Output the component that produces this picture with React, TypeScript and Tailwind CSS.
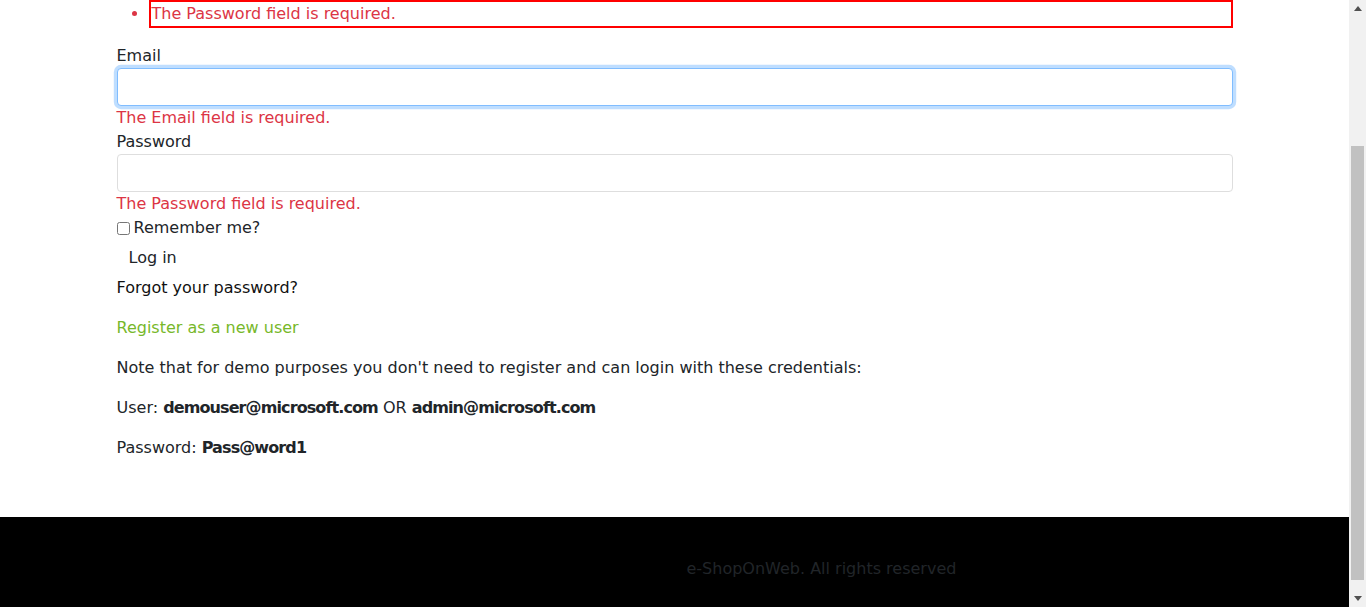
import React, { useLayoutEffect, useRef } from "react";

function Scrollbar() {
  return (
    <div className="flex h-[607px] w-[17px] shrink-0 flex-col bg-[#f1f1f1]">
      <div className="flex h-[17px] items-center justify-center">
        <svg width="8" height="5" viewBox="0 0 8 5">
          <polygon points="4,0 8,5 0,5" fill="#505050" />
        </svg>
      </div>
      <div className="flex flex-1 flex-col px-[2px]">
        <div className="h-[129px]" />
        <div className="h-[434px] bg-[#c1c1c1]" />
      </div>
      <div className="flex h-[17px] items-center justify-center">
        <svg width="8" height="5" viewBox="0 0 8 5">
          <polygon points="0,0 8,0 4,5" fill="#505050" />
        </svg>
      </div>
    </div>
  );
}

export default function App() {
  const ref = useRef<HTMLDivElement>(null);
  useLayoutEffect(() => {
    if (ref.current) ref.current.scrollTop = 179;
  }, []);

  return (
    <div className="flex h-[607px] w-full overflow-hidden bg-white font-['DejaVu_Sans',sans-serif] text-[16px] leading-[24px] text-[#212529]">
      <div ref={ref} className="h-[607px] flex-1 overflow-hidden">
        <header className="h-[100px] bg-black" />
        <main className="mx-auto w-[1116px] pt-[31px] pb-[16px]">
          <h2 className="mb-[8px] text-[32px] leading-[40px]">Log in</h2>
          <ul className="mb-[16px] list-disc pl-[32px] text-[#dc3545]">
            <li className="border-2 border-[#ff0000] pl-[1px] leading-[24px] marker:text-[#dc3545]">
              The Password field is required.
            </li>
          </ul>

          <div className="flex flex-col">
            <label className="text-[#212529]">Email</label>
            <input
              type="email"
              className="h-[38px] w-full rounded-[4px] border border-[#80bdff] bg-white px-3 shadow-[0_0_0_0.2rem_rgba(0,123,255,0.25)] outline-none"
            />
            <span className="leading-[24px] text-[#dc3545]">The Email field is required.</span>
          </div>

          <div className="flex flex-col">
            <label className="text-[#212529]">Password</label>
            <input
              type="password"
              className="h-[38px] w-full rounded-[4px] border border-[#dedede] bg-white px-3 outline-none"
            />
            <span className="leading-[24px] text-[#dc3545]">The Password field is required.</span>
          </div>

          <label className="flex items-center">
            <input type="checkbox" className="mr-[4px] h-[13px] w-[13px]" />
            <span>Remember me?</span>
          </label>

          <button type="button" className="bg-transparent px-[12px] py-[6px] text-[#212529]">
            Log in
          </button>

          <p className="mb-[16px]">
            <a className="text-[#111]">Forgot your password?</a>
          </p>
          <p className="mb-[16px]">
            <a className="text-[#77b82a]">Register as a new user</a>
          </p>
          <p className="mb-[16px]">
            Note that for demo purposes you don't need to register and can login with these credentials:
          </p>
          <p className="mb-[16px]">
            User: <b className="font-bold tracking-[-0.9px]">demouser@microsoft.com</b> OR{" "}
            <b className="font-bold tracking-[-0.9px]">admin@microsoft.com</b>
          </p>
          <p className="mb-[16px]">
            Password: <b className="font-bold tracking-[-0.9px]">Pass@word1</b>
          </p>
        </main>

        <footer className="mt-[25px] h-[104px] bg-black pt-[40px]">
          <div className="mx-auto grid w-[1116px] grid-cols-2">
            <div />
            <div className="pl-[12px] text-[#212529]">e-ShopOnWeb. All rights reserved</div>
          </div>
        </footer>
      </div>
      <Scrollbar />
    </div>
  );
}
